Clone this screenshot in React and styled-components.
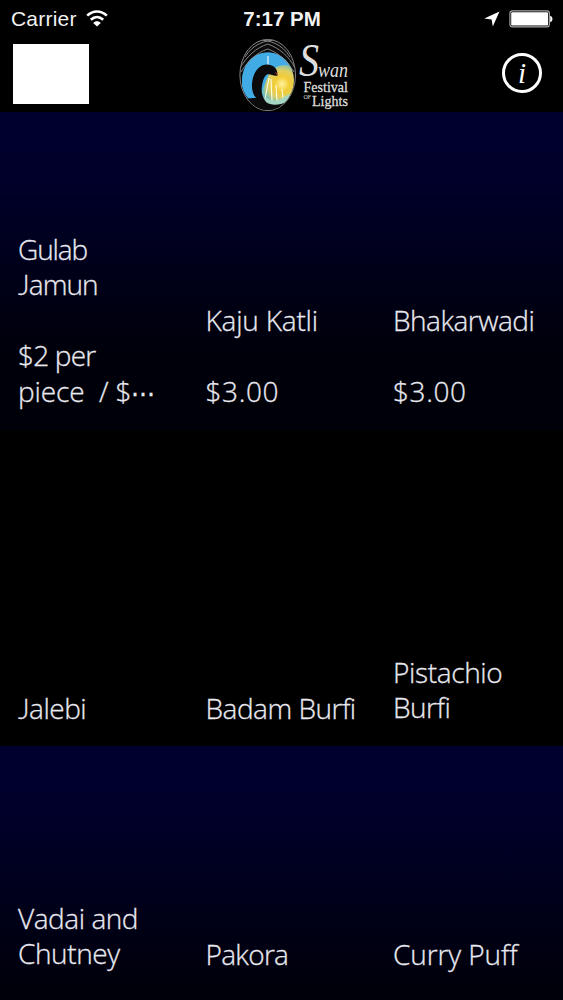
import React from 'react'
import styled, { createGlobalStyle } from 'styled-components';

// every line is [text, letter spacing]
const rows = [
  {
    height: 318,
    lit: true,
    bottom: 20,
    items: [
      { lines: [['Gulab', -1.1], ['Jamun', -0.9], [''], ['$2 per', -0.8], ['piece\u00a0 / $⋯', -0.1]], lift: 0.5 },
      { lines: [['Kaju Katli', -0.2], [''], ['$3.00', 0.6]] },
      { lines: [['Bhakarwadi', -0.5], [''], ['$3.00', 0.6]] },
    ],
  },
  {
    height: 316,
    lit: false,
    bottom: 19,
    items: [
      { lines: [['Jalebi', -0.5]] },
      { lines: [['Badam Burfi', -0.5]] },
      { lines: [['Pistachio', -0.35], ['Burfi', -0.5]], lift: 1 },
    ],
  },
  {
    height: 318,
    lit: true,
    bottom: 91,
    items: [
      { lines: [['Vadai and', -0.45], ['Chutney', -0.4]], lift: 1 },
      { lines: [['Pakora', -0.7]] },
      { lines: [['Curry Puff', -0.1]] },
    ],
  },
];

const SwanLogo = () => (
  <Logo width="120" height="75" viewBox="0 0 120 75">
    <defs>
      <radialGradient id="sun" gradientUnits="userSpaceOnUse" cx="43" cy="47" r="25">
        <stop offset="0" stopColor="#fff3a0" />
        <stop offset="0.3" stopColor="#f2cc35" />
        <stop offset="0.55" stopColor="#e0cf62" />
        <stop offset="0.8" stopColor="#7cc0b4" />
        <stop offset="1" stopColor="#3fa9e4" />
      </radialGradient>
      <clipPath id="oval">
        <ellipse cx="28.7" cy="38" rx="27.4" ry="35.4" />
      </clipPath>
    </defs>
    <ellipse cx="28.7" cy="38" rx="27.8" ry="35.6" fill="#0a0a0a" stroke="#858585" strokeWidth="1" />
    <g clipPath="url(#oval)">
      <ellipse cx="29" cy="43.5" rx="26" ry="28" fill="url(#sun)" />
      <path d="M3 46C3 27 14 15.5 29 15.5c9 0 17 5 22 13-8-2-16 1-21 8L18 68C9 62 3 55 3 46z" fill="#41abe6" />
      <g fill="none" stroke="#929292" strokeWidth="0.9">
        <path d="M1 31C8 19 17 11 28.7 7 40 11 50 19 56 31" />
        <path d="M2 35C9 24 17 16 28.7 12 40 16 48 24 55 35" />
        <path d="M6 20C14 7 26 3 38 3M51 20C43 7 31 3 19 3" />
      </g>
      <path d="M29 19v12" stroke="#e9f7ff" strokeWidth="1.2" />
      <path d="M30 41l-4 21M32 42l1 22M37 48l1 16M43 52l1 9" fill="none" stroke="#fffce0" strokeWidth="1.1" />
      <path d="M24 60c5 0 6 4 12 4 6-1 10-5 15-7l-4 11-22 3z" fill="#a4d6c4" />
      <path d="M38.5 38.5C39 31.5 34 27.5 28 27.5 19 27.5 13.500 37 13 47c-.3 6 1 10 4 14-3 0-5 .5-8 0 3 7 10 12 20 12 8 0 14-3 19-8-7 3-16 4-21 0-4-5-5-10-4-16 1-6 2-9.500 5-11.500 3-1 7 2 10.500 1z" fill="#0b0b0d" />
      <path d="M36.5 35.5l2.3 2.7" stroke="#d8452f" strokeWidth="1" />
    </g>
    <LogoText x="60" y="39" $size={47} $script textLength="20" lengthAdjust="spacingAndGlyphs">S</LogoText>
    <LogoText x="79" y="40" $size={22} $script textLength="30" lengthAdjust="spacingAndGlyphs">wan</LogoText>
    <LogoText x="64.5" y="54.5" $size={15} $bold textLength="44.5" lengthAdjust="spacingAndGlyphs">Festival</LogoText>
    <LogoText x="64.5" y="61.5" $size={6}>OF</LogoText>
    <LogoText x="73" y="68.5" $size={15.5} $bold textLength="36" lengthAdjust="spacingAndGlyphs">Lights</LogoText>
  </Logo>
)

const renderText = (text) => {
  if (text.startsWith('J')) {
    return <><Initial>J</Initial>{text.slice(1)}</>
  }
  if (text.endsWith('⋯')) {
    return <>{text.slice(0, -1)}<Dots>⋯</Dots></>
  }
  return text
}

const App = () => {
  return (
    <Screen>
      <GlobalStyle />
      <StatusBar>
        <Carrier>
          Carrier
          <svg width="22" height="17" viewBox="0 0 22 17" fill="none" stroke="#fff" strokeWidth="2.6">
            <path d="M1.2 5.7C6.8 0 15.2 0 20.8 5.7" />
            <path d="M4.8 9.7c3.8-3.6 8.6-3.6 12.4 0" />
            <path d="M11 16.5L7.2 12.9c2-2.2 5.6-2.2 7.6 0z" fill="#fff" stroke="none" />
          </svg>
        </Carrier>
        <Time>7:17 PM</Time>
        <Indicators>
          <svg width="16" height="16" viewBox="0 0 16 16">
            <path d="M15.5 .5L8.8 15.5 7.6 8.4.3 7.6z" fill="#fff" />
          </svg>
          <svg width="44" height="18" viewBox="0 0 44 18">
            <rect x="0.9" y="0.9" width="39.5" height="16" rx="2.5" fill="none" stroke="#aaa" strokeWidth="1.1" />
            <rect x="2.2" y="2.2" width="36.9" height="13.4" rx="1.2" fill="#fff" />
            <path d="M41.2 5.8c3 .8 3 5.6 0 6.4z" fill="#fff" />
          </svg>
        </Indicators>
      </StatusBar>

      <NavBar>
        <MenuButton aria-label="Menu" />
        <SwanLogo />
        <InfoButton>i</InfoButton>
      </NavBar>

      {/* Food items */}

      {rows.map((row, index) => {
        return <Row key={index} $height={row.height} $lit={row.lit} $bottom={row.bottom}>
          {row.items.map((item) => {
            return <Item key={item.lines[0][0]} $lift={item.lift}>
              {item.lines.map(([text, spacing], i) => {
                return <Line key={i} $spacing={spacing}>{renderText(text)}</Line>
              })}
            </Item>
          })}
        </Row>
      })}
    </Screen>
  )
}

const GlobalStyle = createGlobalStyle`
  body {
    margin: 0;
    background-color: #000;
  }
  * {
    box-sizing: border-box;
  }
`;

const Screen = styled.main`
  width: 563px;
  height: 1000px;
  overflow: hidden;
  background-color: #000;
  color: #fff;
  font-family: "Liberation Sans", sans-serif;
`;

const StatusBar = styled.header`
  display: grid;
  grid-template-columns: 1fr auto 1fr;
  align-items: center;
  height: 37px;
  padding: 0 10px 0 11px;
`;

const Carrier = styled.div`
  display: flex;
  align-items: center;
  gap: 9px;
  font-size: 21px;
  letter-spacing: 0.2px;
  color: #f2f2f2;
`;

const Time = styled.div`
  font-size: 20.5px;
  font-weight: bold;
  color: #f2f2f2;
`;

const Indicators = styled.div`
  display: flex;
  justify-content: flex-end;
  align-items: center;
  gap: 9px;
`;

const NavBar = styled.nav`
  display: grid;
  grid-template-columns: 226.5px 1fr auto;
  align-items: start;
  height: 75px;
  padding: 0 21px 0 12.5px;
`;

const MenuButton = styled.button`
  width: 76px;
  height: 60px;
  margin-top: 7px;
  border: none;
  background-color: #fff;
`;

const InfoButton = styled.button`
  width: 40px;
  height: 40px;
  margin-top: 16px;
  padding: 0;
  border: 3px solid #fff;
  border-radius: 50%;
  background: none;
  color: #fff;
  font: italic 29px/32px "Liberation Serif", serif;
`;

const Logo = styled.svg`
  overflow: visible;
`;

const LogoText = styled.text`
  fill: #dedede;
  stroke: #dedede;
  stroke-width: ${({ $bold }) => ($bold ? 0.3 : 0)}px;
  font-family: "Liberation Serif", serif;
  font-size: ${({ $size }) => $size}px;
  font-style: ${({ $script }) => ($script ? 'italic' : 'normal')};
`;

const Row = styled.section`
  display: grid;
  grid-template-columns: repeat(3, 187.5px);
  align-items: end;
  height: ${({ $height }) => $height}px;
  padding-bottom: ${({ $bottom }) => $bottom}px;
  background: ${({ $lit }) => ($lit ? 'linear-gradient(#00002f, #00002a 22%, #00000b 75%, #000008)' : '#000')};
`;

const Item = styled.div`
  padding-left: 18px;
  padding-bottom: ${({ $lift }) => $lift || 0}px;
`;

const Line = styled.div`
  height: 35.6px;
  font: 300 28px/35.6px "Open Sans", "Noto Sans", sans-serif;
  letter-spacing: ${({ $spacing }) => $spacing || 0}px;
  white-space: nowrap;
  color: #e9e9f0;
  -webkit-text-stroke: 0.3px #e9e9f0;
`;

/* Lato keeps the J on the baseline */
const Initial = styled.span`
  font-family: Lato, sans-serif;
  font-weight: 300;
  line-height: 1;
`;

const Dots = styled.span`
  font-size: 24px;
  line-height: 1;
`;

export default App
